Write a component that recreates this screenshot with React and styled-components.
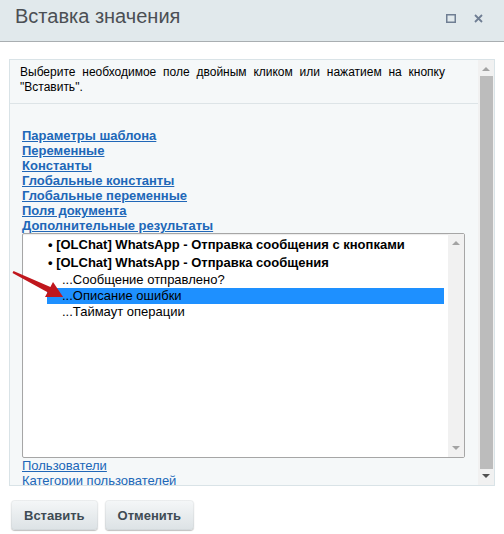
import React from 'react';
import styled, { createGlobalStyle } from 'styled-components';

const GlobalStyle = createGlobalStyle`
  body {
    margin: 0;
    background: #fff;
    font-family: 'Liberation Sans', Arial, sans-serif;
  }
`;

const Dialog = styled.div`
  position: relative;
  width: 504px;
  height: 534px;
  overflow: hidden;
  background: #fff;
`;

const Header = styled.div`
  height: 41px;
  display: flex;
  align-items: center;
  justify-content: space-between;
  padding: 0 21px 0 15px;
  background: #e1e9ec;
  border-bottom: 1px solid #a9aeb1;
`;

const Title = styled.div`
  font-size: 20px;
  color: #4b4f54;
  margin-top: -8px;
`;

const HeaderIcons = styled.div`
  display: flex;
  align-items: center;
  gap: 18px;
  margin-top: -4px;
`;

const Body = styled.div`
  padding: 17px 9px 0 9px;
`;

const Panel = styled.div`
  height: 425px;
  display: flex;
  border: 1px solid #d9e3e7;
  background: #f5f8f9;
`;

const PanelContent = styled.div`
  flex: 1;
  min-width: 0;
  overflow: hidden;
`;

const Note = styled.div`
  padding: 5px 33px 8px 10px;
  font-size: 12px;
  line-height: 15px;
  color: #000;
  text-align: justify;
  border-bottom: 1px solid #dde4e7;
`;

const LinkList = styled.div`
  padding: 24px 0 0 12px;
`;

const Link = styled.a`
  display: block;
  font-size: 13px;
  font-weight: ${(p) => (p.$light ? 'normal' : 'bold')};
  line-height: 15px;
  color: #2067b8;
  text-decoration: underline;
  white-space: nowrap;
`;

const Scrollbar = styled.div`
  width: 16px;
  flex: none;
  display: flex;
  flex-direction: column;
  align-items: center;
  background: #f1f1f1;
`;

const Arrow = styled.div`
  width: 0;
  height: 0;
  margin: ${(p) => p.$margin};
  border-left: 4px solid transparent;
  border-right: 4px solid transparent;
  ${(p) => (p.$down ? 'border-top' : 'border-bottom')}: 4px solid ${(p) => p.$color};
`;

const Thumb = styled.div`
  width: 13px;
  flex: 1;
  background: #bcbcbc;
`;

const Listbox = styled.div`
  width: 441px;
  height: 223px;
  display: flex;
  border: 1px solid #a6a6a6;
  border-radius: 2px;
  background: #fff;
  box-shadow: inset 0 1px 1px rgba(0, 0, 0, 0.08);
`;

const Options = styled.div`
  flex: 1;
  padding: 2px 4px 0 0;
  font-size: 13px;
  color: #000;
`;

const Group = styled.div`
  height: 18px;
  line-height: 18px;
  padding-left: 25px;
  font-weight: bold;
  white-space: nowrap;
`;

const Option = styled.div`
  height: 16px;
  line-height: 16px;
  margin-left: 24px;
  padding-left: 15px;
  white-space: nowrap;
  background: ${(p) => (p.$selected ? '#1e90ff' : 'transparent')};
`;

const InnerScroll = styled(Scrollbar)`
  justify-content: space-between;
`;

const Buttons = styled.div`
  display: flex;
  gap: 7px;
  padding: 14px 0 0 2px;
`;

const Button = styled.button`
  height: 30px;
  padding: 0 13px;
  border: none;
  border-radius: 4px;
  background: linear-gradient(#f5f7f8, #dce2e5);
  box-shadow: 0 1px 1px rgba(0, 0, 0, 0.25), inset 0 0 0 1px rgba(0, 0, 0, 0.04);
  font-family: 'Liberation Sans', Arial, sans-serif;
  font-size: 13px;
  font-weight: bold;
  color: #3f4b54;
`;

const Pointer = styled.svg`
  position: absolute;
  left: 0;
  top: 0;
  pointer-events: none;
`;

const topLinks = [
  'Параметры шаблона',
  'Переменные',
  'Константы',
  'Глобальные константы',
  'Глобальные переменные',
  'Поля документа',
  'Дополнительные результаты',
];

const options = ['...Сообщение отправлено?', '...Описание ошибки', '...Таймаут операции'];

export default function App() {
  return (
    <Dialog>
      <GlobalStyle />
      <Header>
        <Title>Вставка значения</Title>
        <HeaderIcons>
          <svg width="10" height="9" viewBox="0 0 10 9">
            <rect x="0.75" y="0.75" width="8.5" height="7.5" fill="none" stroke="#6f7e93" strokeWidth="1.5" />
          </svg>
          <svg width="9" height="9" viewBox="0 0 9 9">
            <path d="M1 1L8 8M8 1L1 8" stroke="#6f7e93" strokeWidth="1.8" />
          </svg>
        </HeaderIcons>
      </Header>
      <Body>
        <Panel>
          <PanelContent>
            <Note>
              Выберите необходимое поле двойным кликом или нажатием на кнопку "Вставить".
            </Note>
            <LinkList>
              {topLinks.map((t) => (
                <Link key={t}>{t}</Link>
              ))}
              <Listbox>
                <Options>
                  <Group>• [OLChat] WhatsApp - Отправка сообщения с кнопками</Group>
                  <Group>• [OLChat] WhatsApp - Отправка сообщения</Group>
                  {options.map((o, i) => (
                    <Option key={o} $selected={i === 1}>
                      {o}
                    </Option>
                  ))}
                </Options>
                <InnerScroll>
                  <Arrow $color="#a3a3a3" $margin="7px 0 0" />
                  <Arrow $down $color="#a3a3a3" $margin="0 0 7px" />
                </InnerScroll>
              </Listbox>
              <Link $light>Пользователи</Link>
              <Link $light>Категории пользователей</Link>
            </LinkList>
          </PanelContent>
          <Scrollbar>
            <Arrow $color="#a3a3a3" $margin="7px 0 5px" />
            <Thumb />
            <Arrow $down $color="#505050" $margin="5px 0 7px" />
          </Scrollbar>
        </Panel>
        <Buttons>
          <Button>Вставить</Button>
          <Button>Отменить</Button>
        </Buttons>
      </Body>
      <Pointer width="504" height="534" viewBox="0 0 504 534">
        <polygon
          points="12.5,272.9 13.5,271.1 50.4,286.9 53,282 63.1,297 45,297 47.6,292.2"
          fill="#c0171d"
        />
      </Pointer>
    </Dialog>
  );
}
